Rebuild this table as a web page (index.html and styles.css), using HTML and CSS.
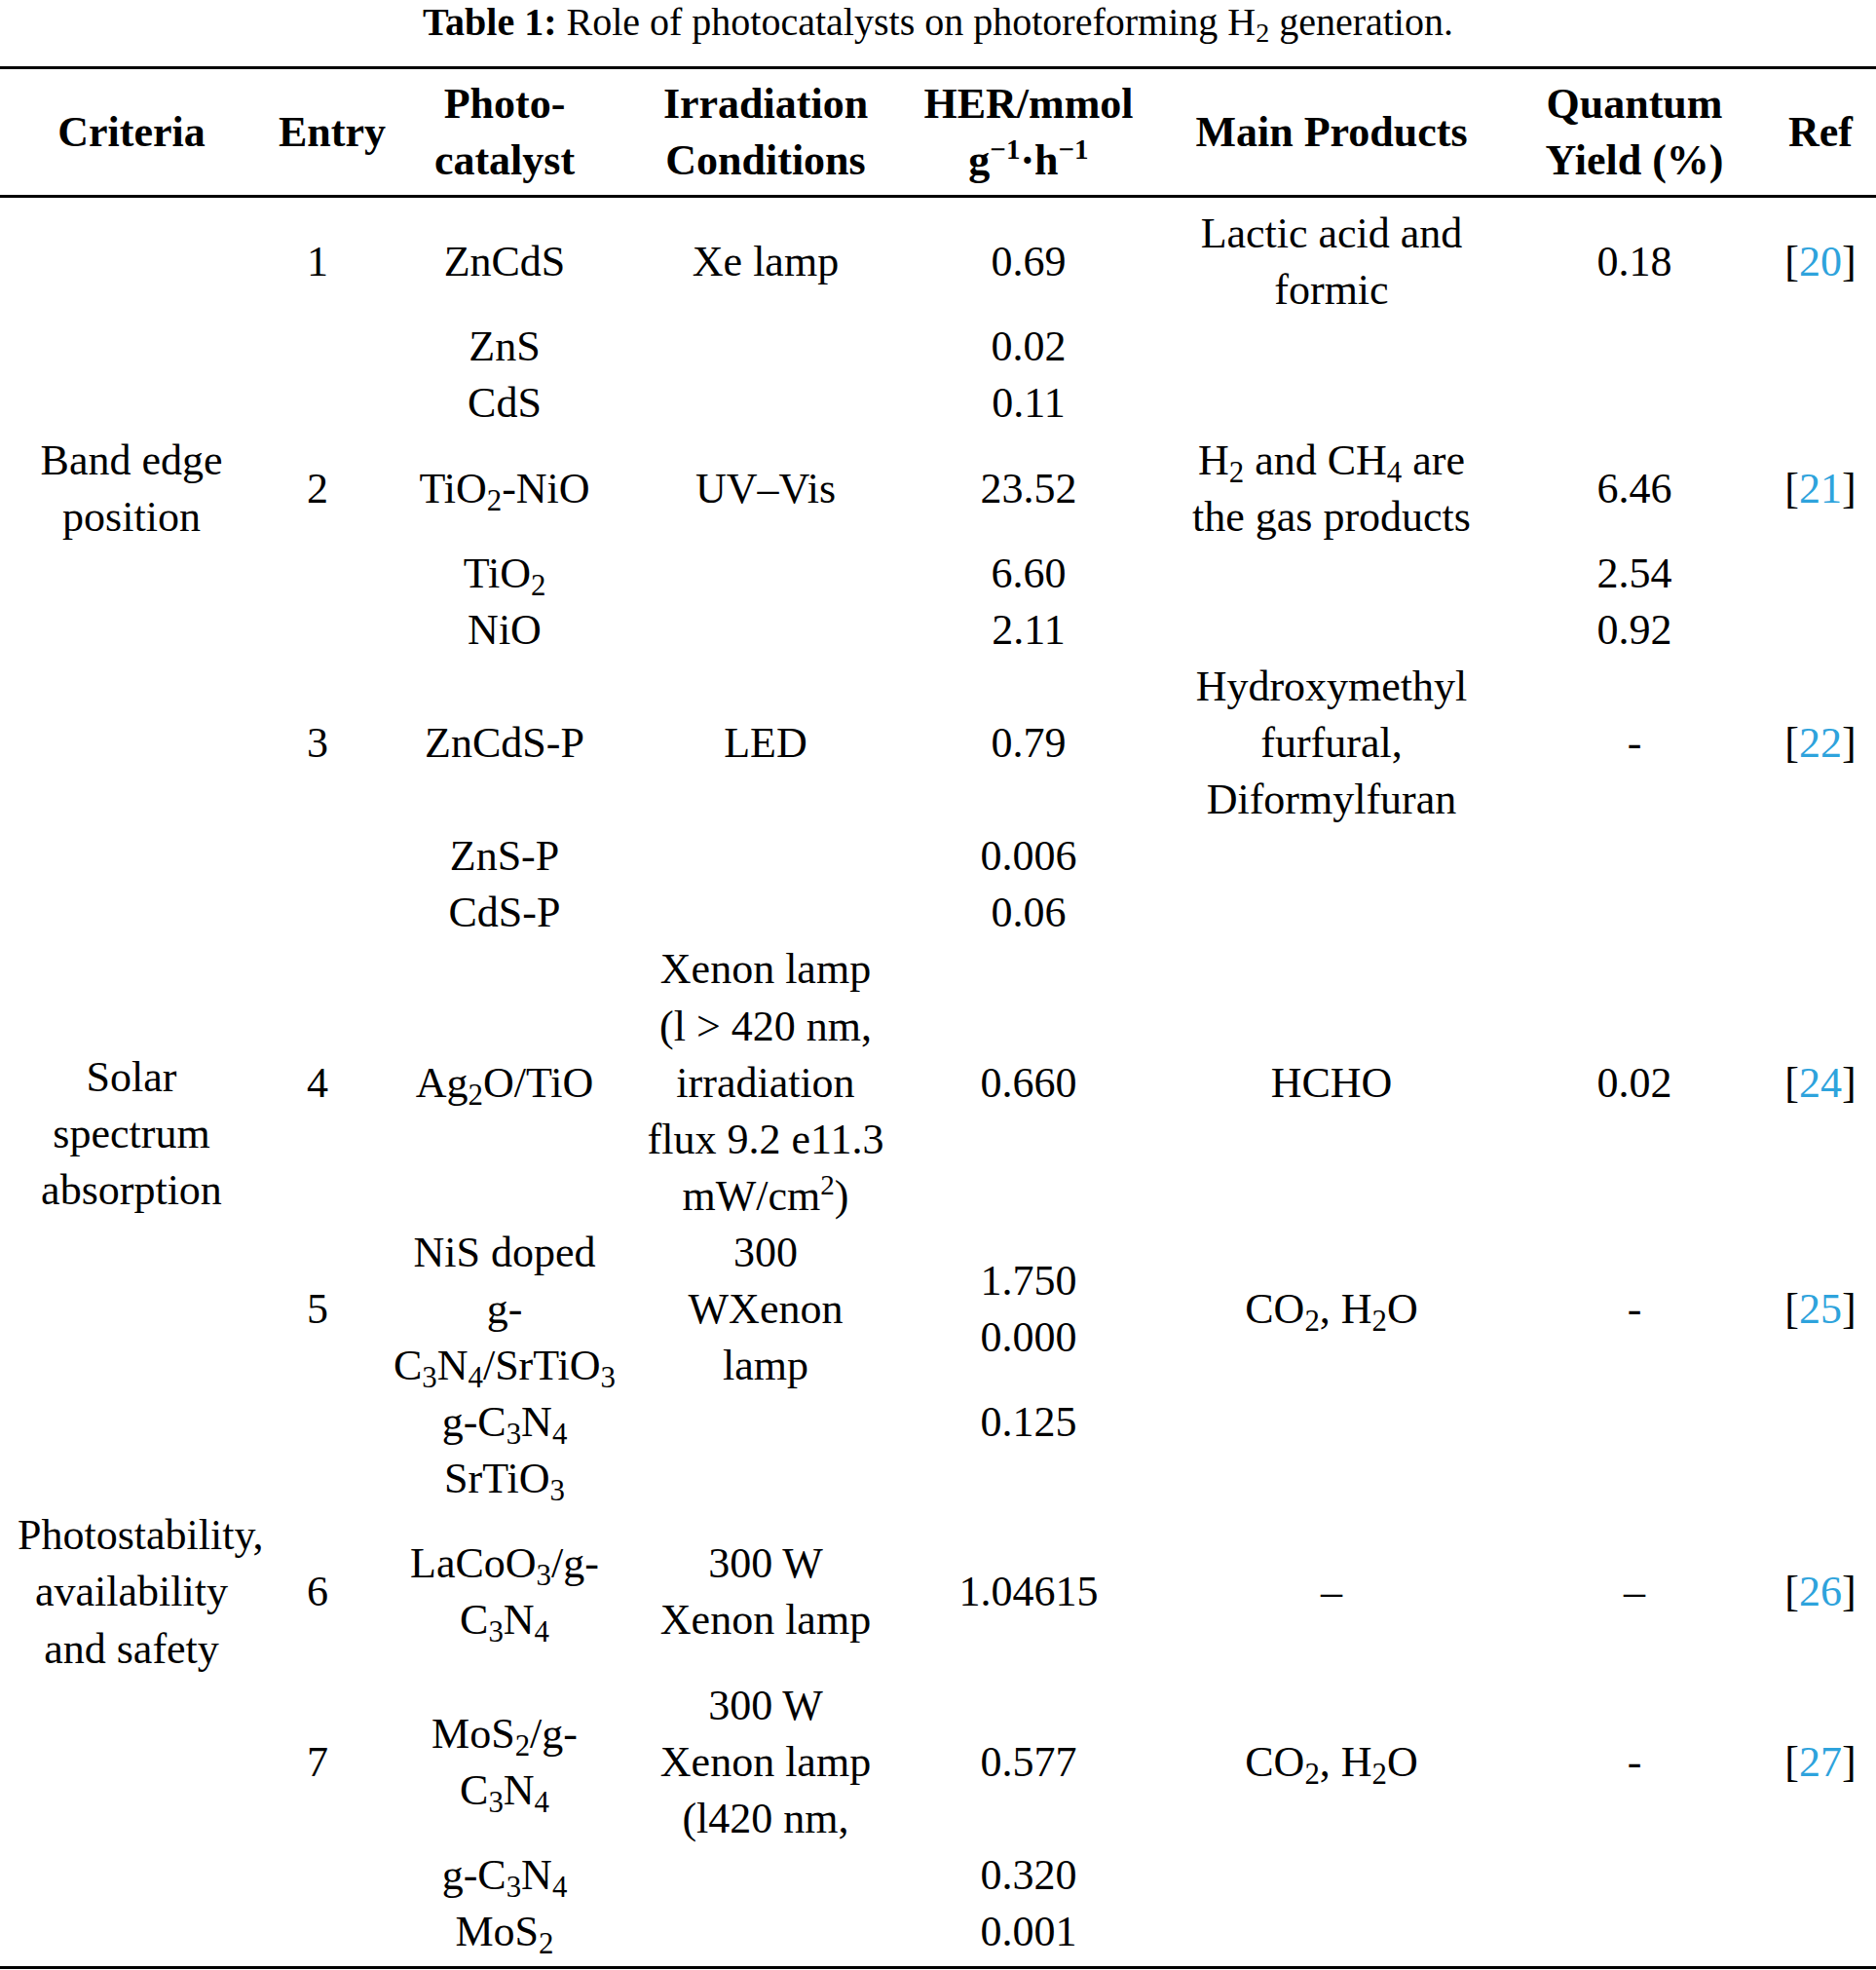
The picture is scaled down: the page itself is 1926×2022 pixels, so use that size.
FILE: index.html
```html
<!DOCTYPE html>
<html lang="en">
<head>
<meta charset="utf-8">
<title>Table 1</title>
<link rel="stylesheet" href="styles.css">
</head>
<body>
<p class="caption"><b>Table 1:</b> Role of photocatalysts on photoreforming H<sub>2</sub> generation.</p>
<table class="data">
  <colgroup>
    <col class="c-crit"><col class="c-entry"><col class="c-cat"><col class="c-irr"><col class="c-her"><col class="c-prod"><col class="c-qy"><col class="c-ref">
  </colgroup>
  <thead>
    <tr>
      <th class="crit">Criteria</th>
      <th class="entry-h">Entry</th>
      <th>Photo-<br>catalyst</th>
      <th>Irradiation<br>Conditions</th>
      <th>HER/mmol<br>g<sup>−1</sup>·h<sup>−1</sup></th>
      <th>Main Products</th>
      <th>Quantum<br>Yield (%)</th>
      <th class="ref">Ref</th>
    </tr>
  </thead>
  <tbody>
    <tr>
      <td class="crit"></td><td class="entry">1</td><td>ZnCdS</td><td>Xe lamp</td><td>0.69</td><td>Lactic acid and<br>formic</td><td>0.18</td><td class="ref">[<a href="#r20">20</a>]</td>
    </tr>
    <tr>
      <td class="crit"></td><td class="entry"></td><td>ZnS<br>CdS</td><td></td><td>0.02<br>0.11</td><td></td><td></td><td class="ref"></td>
    </tr>
    <tr>
      <td class="crit">Band edge<br>position</td><td class="entry">2</td><td>TiO<sub>2</sub>-NiO</td><td>UV–Vis</td><td>23.52</td><td>H<sub>2</sub> and CH<sub>4</sub> are<br>the gas products</td><td>6.46</td><td class="ref">[<a href="#r21">21</a>]</td>
    </tr>
    <tr>
      <td class="crit"></td><td class="entry"></td><td>TiO<sub>2</sub><br>NiO</td><td></td><td>6.60<br>2.11</td><td></td><td>2.54<br>0.92</td><td class="ref"></td>
    </tr>
    <tr>
      <td class="crit"></td><td class="entry">3</td><td>ZnCdS-P</td><td>LED</td><td>0.79</td><td>Hydroxymethyl<br>furfural,<br>Diformylfuran</td><td>-</td><td class="ref">[<a href="#r22">22</a>]</td>
    </tr>
    <tr>
      <td class="crit"></td><td class="entry"></td><td>ZnS-P<br>CdS-P</td><td></td><td>0.006<br>0.06</td><td></td><td></td><td class="ref"></td>
    </tr>
    <tr>
      <td class="crit crit-low">Solar<br>spectrum<br>absorption</td><td class="entry">4</td><td>Ag<sub>2</sub>O/TiO</td><td>Xenon lamp<br>(l &gt; 420 nm,<br>irradiation<br>flux 9.2 e11.3<br>mW/cm<sup>2</sup>)</td><td>0.660</td><td>HCHO</td><td>0.02</td><td class="ref">[<a href="#r24">24</a>]</td>
    </tr>
    <tr>
      <td class="crit"></td><td class="entry">5</td><td>NiS doped<br>g-<br>C<sub>3</sub>N<sub>4</sub>/SrTiO<sub>3</sub></td><td>300<br>WXenon<br>lamp</td><td>1.750<br>0.000</td><td>CO<sub>2</sub>, H<sub>2</sub>O</td><td>-</td><td class="ref">[<a href="#r25">25</a>]</td>
    </tr>
    <tr>
      <td class="crit"></td><td class="entry"></td><td>g-C<sub>3</sub>N<sub>4</sub><br>SrTiO<sub>3</sub></td><td></td><td class="top">0.125</td><td></td><td></td><td class="ref"></td>
    </tr>
    <tr>
      <td class="crit">Photostability,<br>availability<br>and safety</td><td class="entry">6</td><td>LaCoO<sub>3</sub>/g-<br>C<sub>3</sub>N<sub>4</sub></td><td>300 W<br>Xenon lamp</td><td>1.04615</td><td>–</td><td>–</td><td class="ref">[<a href="#r26">26</a>]</td>
    </tr>
    <tr>
      <td class="crit"></td><td class="entry">7</td><td>MoS<sub>2</sub>/g-<br>C<sub>3</sub>N<sub>4</sub></td><td>300 W<br>Xenon lamp<br>(l420 nm,</td><td>0.577</td><td>CO<sub>2</sub>, H<sub>2</sub>O</td><td>-</td><td class="ref">[<a href="#r27">27</a>]</td>
    </tr>
    <tr>
      <td class="crit"></td><td class="entry"></td><td>g-C<sub>3</sub>N<sub>4</sub><br>MoS<sub>2</sub></td><td></td><td>0.320<br>0.001</td><td></td><td></td><td class="ref"></td>
    </tr>
  </tbody>
</table>
</body>
</html>
```

FILE: styles.css
```css
html, body {
  margin: 0;
  padding: 0;
  background: #ffffff;
}

body {
  font-family: "Liberation Serif", "Times New Roman", serif;
  color: #000000;
  width: 1926px;
}

.caption {
  margin: 0 0 23px 0;
  font-size: 40px;
  line-height: 45px;
  text-align: center;
}

.caption b {
  font-weight: bold;
}

sub {
  font-size: 0.7em;
  vertical-align: -0.25em;
  line-height: 0;
}

sup {
  font-size: 0.66em;
  vertical-align: 0.55em;
  line-height: 0;
}

.data {
  width: 1926px;
  table-layout: fixed;
  border-collapse: separate;
  border-spacing: 0;
  font-size: 44px;
  line-height: 58.1px;
}

.c-crit { width: 270px; }
.c-entry { width: 130px; }
.c-cat { width: 236px; }
.c-irr { width: 300px; }
.c-her { width: 240px; }
.c-prod { width: 382px; }
.c-qy { width: 240px; }
.c-ref { width: 128px; }

.data th,
.data td {
  padding: 0;
  text-align: center;
  vertical-align: middle;
  white-space: nowrap;
}

.data th {
  font-weight: bold;
  border-top: 3px solid #000;
  border-bottom: 3px solid #000;
  padding-top: 7px;
  padding-bottom: 6px;
}

.data .crit {
  padding-left: 18px;
  padding-right: 18px;
}

.data .entry-h {
  padding-left: 12px;
}

.data .entry {
  padding-right: 18px;
}

.data .ref {
  padding-left: 14px;
}

.data tbody tr:first-child td {
  padding-top: 8px;
}

.data tbody tr:last-child td {
  padding-bottom: 6px;
  border-bottom: 3px solid #000;
}

.data td.top {
  vertical-align: top;
}

.data td.crit-low {
  vertical-align: bottom;
  padding-bottom: 6px;
}

.ref a {
  color: #2ea3dc;
  text-decoration: none;
}
```
